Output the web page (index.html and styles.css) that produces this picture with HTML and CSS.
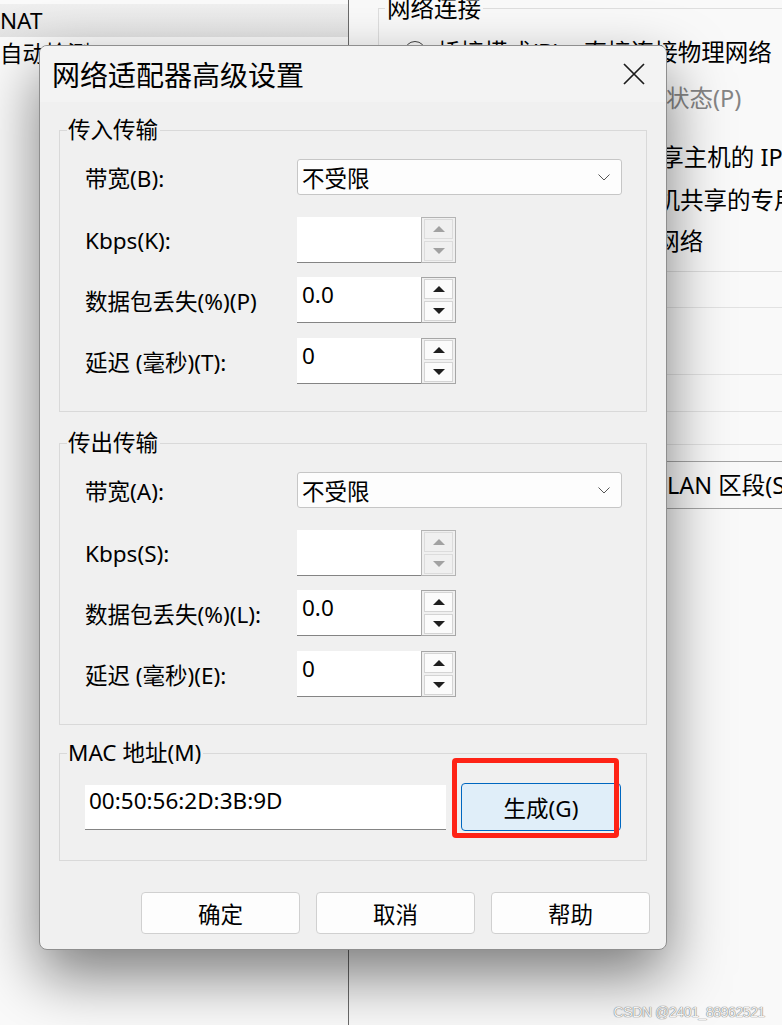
FILE: index.html
```html
<!DOCTYPE html>
<html lang="zh-CN">
<head>
    <meta charset="UTF-8">
    <meta name="viewport" content="width=device-width, initial-scale=1.0">
    <title>网络适配器高级设置</title>
    <link rel="stylesheet" href="styles.css">
</head>
<body>
    <!-- window behind the dialog -->
    <div class="desk">
        <div class="pane-left">
            <div class="item sel">NAT</div>
            <div class="item">自动检测</div>
        </div>
        <div class="pane-right">
            <fieldset class="net">
                <legend>网络连接</legend>
                <div class="opt r1"><span class="radio"></span>桥接模式(B)：直接连接物理网络</div>
                <div class="opt sub r2"><span class="check"></span>复制物理网络连接状态(P)</div>
                <div class="opt r3"><span class="radio"></span>NAT 模式(N)：用于共享主机的 IP 地址</div>
                <div class="opt r4"><span class="radio"></span>仅主机模式(H)：与主机共享的专用网络</div>
                <div class="opt r5"><span class="radio"></span>自定义(U)：特定虚拟网络</div>
            </fieldset>
            <div class="bg-row h1"></div>
            <div class="bg-row h2"></div>
            <div class="bg-row h3"></div>
            <div class="bg-row h4"></div>
            <div class="lan-btn">LAN 区段(S)...</div>
        </div>
    </div>

    <!-- the dialog -->
    <div class="dialog">
        <div class="dlg-title">
            <span>网络适配器高级设置</span>
            <svg class="close" width="22" height="22" viewBox="0 0 22 22">
                <path d="M1 1 L21 21 M21 1 L1 21" stroke="#1c1c1c" stroke-width="1.7" fill="none"/>
            </svg>
        </div>

        <div class="dlg-body">
            <fieldset class="grp">
                <legend>传入传输</legend>
                <div class="grp-body">
                    <div class="row row-sel">
                        <label>带宽(B):</label>
                        <div class="select"><span>不受限</span><svg width="12" height="7" viewBox="0 0 12 7"><path d="M0.5 0.5 L6 6 L11.5 0.5" stroke="#555" fill="none"/></svg></div>
                    </div>
                    <div class="row">
                        <label>Kbps(K):</label>
                        <div class="spin off"><div class="spin-field"></div><div class="spin-btns"><span class="up"></span><span class="down"></span></div></div>
                    </div>
                    <div class="row">
                        <label>数据包丢失(%)(P)</label>
                        <div class="spin"><div class="spin-field">0.0</div><div class="spin-btns"><span class="up"></span><span class="down"></span></div></div>
                    </div>
                    <div class="row">
                        <label>延迟 (毫秒)(T):</label>
                        <div class="spin"><div class="spin-field">0</div><div class="spin-btns"><span class="up"></span><span class="down"></span></div></div>
                    </div>
                </div>
            </fieldset>

            <fieldset class="grp">
                <legend>传出传输</legend>
                <div class="grp-body">
                    <div class="row row-sel">
                        <label>带宽(A):</label>
                        <div class="select"><span>不受限</span><svg width="12" height="7" viewBox="0 0 12 7"><path d="M0.5 0.5 L6 6 L11.5 0.5" stroke="#555" fill="none"/></svg></div>
                    </div>
                    <div class="row">
                        <label>Kbps(S):</label>
                        <div class="spin off"><div class="spin-field"></div><div class="spin-btns"><span class="up"></span><span class="down"></span></div></div>
                    </div>
                    <div class="row">
                        <label>数据包丢失(%)(L):</label>
                        <div class="spin"><div class="spin-field">0.0</div><div class="spin-btns"><span class="up"></span><span class="down"></span></div></div>
                    </div>
                    <div class="row">
                        <label>延迟 (毫秒)(E):</label>
                        <div class="spin"><div class="spin-field">0</div><div class="spin-btns"><span class="up"></span><span class="down"></span></div></div>
                    </div>
                </div>
            </fieldset>

            <fieldset class="grp mac">
                <legend>MAC 地址(M)</legend>
                <div class="grp-body mac-body">
                    <div class="mac-field">00:50:56:2D:3B:9D</div>
                    <div class="gen-wrap">
                        <div class="btn gen">生成(G)</div>
                        <div class="mark"></div>
                    </div>
                </div>
            </fieldset>

            <div class="btn-row">
                <div class="btn">确定</div>
                <div class="btn">取消</div>
                <div class="btn">帮助</div>
            </div>
        </div>
    </div>

    <div class="watermark">CSDN @2401_88962521</div>
</body>
</html>
```

FILE: styles.css
```css
/* page + background window */
body {
    margin: 0;
    height: 1025px;
    overflow: hidden;
    position: relative;
    font-family: "Noto Sans", "Noto Sans CJK SC", sans-serif;
    font-size: 22.5px;
    color: #000;
    background: #f8f8f8;
}
.desk {
    display: grid;
    grid-template-columns: 349px 1fr;
    height: 1025px;
}
.pane-left {
    background: #fafafa;
    border-right: 1px solid #6a6a6a;
    padding-top: 4px;
}
.item {
    height: 33px;
    line-height: 33px;
    padding-left: 0;
    white-space: nowrap;
}
.item.sel {
    background: linear-gradient(#efefef, #e2e2e2);
}
.pane-right {
    background: #f9f9f9;
    padding-left: 29px;
    overflow: hidden;
    font-size: 23.5px;
}
.net {
    margin: 0;
    padding: 0 0 15px 0;
    border: 1px solid #dedede;
    border-right: none;
    min-width: 0;
}
.net legend {
    margin-left: 6px;
    padding: 0 2px;
    line-height: 16px;
}
.opt {
    height: 30px;
    line-height: 30px;
    padding-left: 25px;
    white-space: nowrap;
    display: flex;
    align-items: center;
}
.radio {
    width: 22px;
    height: 22px;
    border: 1px solid #444;
    border-radius: 50%;
    box-sizing: border-box;
    margin-right: 11px;
    flex: none;
}
.check {
    width: 20px;
    height: 20px;
    border: 1px solid #aaa;
    border-radius: 3px;
    box-sizing: border-box;
    margin-right: 9px;
    flex: none;
}
.opt.sub { padding-left: 70px; color: #858585; }
.r1 { margin-top: 21px; }
.r2 { margin-top: 16px; }
.r3 { margin-top: 29px; }
.r4 { margin-top: 13px; }
.r5 { margin-top: 11px; }
.bg-row { border-bottom: 1px solid #e2e2e2; }
.h1 { height: 35px; }
.h2 { height: 66px; }
.h3 { height: 36px; }
.h4 { height: 32px; }
.lan-btn {
    margin-top: 16px;
    height: 46px;
    line-height: 46px;
    border-top: 1px solid #a4a4a4;
    border-bottom: 1px solid #a4a4a4;
    padding-left: 289px;
    white-space: nowrap;
}

/* dialog */
.dialog {
    position: absolute;
    left: 39px;
    top: 45px;
    width: 628px;
    box-sizing: border-box;
    border: 1px solid #8e8e8e;
    border-radius: 8px;
    background: #f0f0f0;
    overflow: hidden;
    box-shadow: 0 26px 60px rgba(0, 0, 0, 0.5);
}
.dlg-title {
    height: 56px;
    display: flex;
    align-items: center;
    justify-content: space-between;
    padding: 0 21px 0 12px;
    background: #f3f3f3;
    font-size: 28px;
}
.dlg-body {
    padding: 15px 19px 15px;
}
.grp {
    margin: 0 0 18px;
    padding: 0;
    border: 1px solid #d9d9d9;
    min-width: 0;
}
.grp + .grp.mac { margin-top: -3px; }
.grp legend {
    margin-left: 7px;
    padding: 0 2px 0 1px;
    line-height: 26px;
}
.grp-body {
    padding: 16px 0 27px 25px;
}
.row {
    display: grid;
    grid-template-columns: 212px auto;
    align-items: center;
    margin-top: 14px;
}
.row:nth-child(4) { margin-top: 15px; }
.row-sel { margin-top: 0; margin-bottom: 22px; }
.row label { white-space: nowrap; }

.select {
    width: 325px;
    height: 36px;
    box-sizing: border-box;
    border: 1px solid #c6c6c6;
    border-radius: 3px;
    background: #fdfdfd;
    display: flex;
    align-items: center;
    justify-content: space-between;
    padding: 0 11px 0 4px;
}

.spin {
    display: flex;
    height: 46px;
}
.spin-field {
    width: 124px;
    box-sizing: border-box;
    background: #fff;
    border-bottom: 1px solid #848484;
    padding: 3px 5px 0;
    line-height: 30px;
}
.spin-btns {
    width: 35px;
    box-sizing: border-box;
    border: 1px solid #a6a6a6;
    padding: 1px 2px;
    display: flex;
    flex-direction: column;
    gap: 2px;
}
.spin-btns span {
    flex: 1;
    border: 1px solid #d4d4d4;
    background: #fbfbfb;
    display: flex;
    align-items: center;
    justify-content: center;
}
.up::before, .down::before {
    content: "";
    border-left: 6px solid transparent;
    border-right: 6px solid transparent;
}
.up::before { border-bottom: 6px solid #1e1e1e; }
.down::before { border-top: 6px solid #1e1e1e; }
.spin.off .spin-btns { border-color: #b4b4b4; }
.spin.off .spin-btns span { background: #f0f0f0; border-color: #dcdcdc; }
.spin.off .up::before { border-bottom-color: #a2a2a2; }
.spin.off .down::before { border-top-color: #a2a2a2; }

/* mac group */
.mac-body {
    display: flex;
    align-items: center;
    padding: 17px 0 29px 25px;
}
.mac-field {
    width: 361px;
    height: 45px;
    box-sizing: border-box;
    background: #fff;
    border-bottom: 1px solid #848484;
    padding: 0 4px;
    line-height: 32px;
    margin-right: 15px;
}
.gen-wrap { position: relative; }
.btn {
    width: 159px;
    height: 42px;
    box-sizing: border-box;
    border: 1px solid #d0d0d0;
    border-radius: 4px;
    background: #fdfdfd;
    display: flex;
    align-items: center;
    justify-content: center;
}
.btn.gen {
    width: 160px;
    height: 48px;
    background: #e0eef9;
    border-color: #0067c0;
}
/* red annotation box */
.mark {
    position: absolute;
    left: -9px;
    top: -25px;
    width: 167px;
    height: 80px;
    box-sizing: border-box;
    border: 5px solid #fe2316;
    border-radius: 4px;
}
.btn-row {
    display: flex;
    justify-content: flex-end;
    gap: 16px;
    margin: 31px -3px 0 0;
}

.watermark {
    position: absolute;
    right: 17px;
    bottom: 5px;
    font-family: "Liberation Sans", sans-serif;
    font-size: 14px;
    letter-spacing: -0.4px;
    color: #f2f2f2;
    text-shadow: 0 0 1px #6f6f6f, 0 0 1px #6f6f6f;
}
```
